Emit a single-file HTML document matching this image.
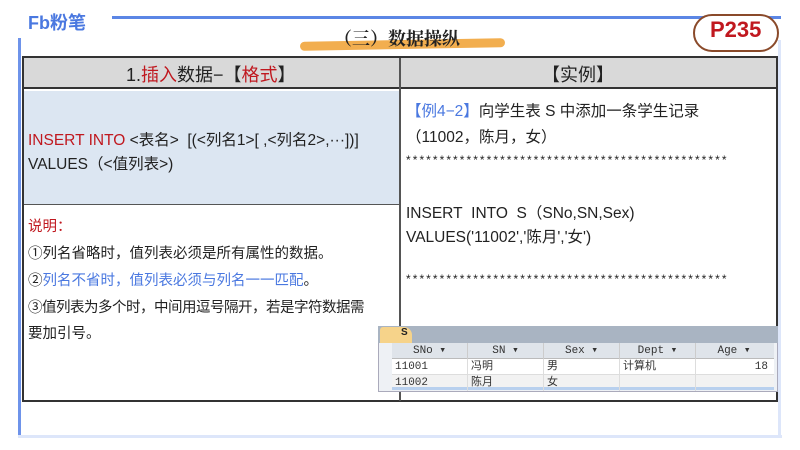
<!DOCTYPE html><html><head><meta charset="utf-8"><style>
*{margin:0;padding:0;box-sizing:border-box}
body{width:800px;height:450px;background:#fff;position:relative;overflow:hidden;font-family:"Liberation Sans","Noto Sans CJK SC",sans-serif;color:#222}
.a{position:absolute}
.t{position:absolute;font-size:15.5px;white-space:nowrap}
.c{position:absolute;font-size:14.5px;white-space:nowrap}
.s{position:absolute;font-size:12px;letter-spacing:2.05px;white-space:nowrap}
.r{color:#c0181f}.b{color:#4a78e0}
</style></head><body>
<div class="a" style="left:112px;top:16px;width:669px;height:3px;background:#5b86e5"></div>
<div class="a" style="left:18px;top:38px;width:3px;height:400px;background:#6e93ea"></div>
<div class="a" style="left:18px;top:435px;width:764px;height:3px;background:#dde6fa"></div>
<div class="a" style="left:778px;top:40px;width:3px;height:398px;background:#dde6fa"></div>
<div class="t" style="left:28px;top:9px;font-size:18px;font-weight:bold;color:#4a78e0">Fb粉笔</div>
<div class="a" style="left:300px;top:40px;width:205px;height:9px;background:#f0a030;border-radius:6px;transform:rotate(-1deg);opacity:.85"></div>
<div class="t" style="left:334px;top:25px;font-size:18px;font-weight:bold;font-family:'Noto Serif CJK SC',serif">（三）数据操纵</div>
<div class="a" style="left:693px;top:14px;width:86px;height:38px;border:2px solid #8a4a2a;border-radius:20px;background:#fff"></div>
<div class="t" style="left:710px;top:17px;font-size:22px;font-weight:bold;color:#c0181f">P235</div>
<div class="a" style="left:22px;top:56px;width:756px;height:346px;border:2px solid #333"></div>
<div class="a" style="left:24px;top:58px;width:752px;height:31px;background:#d9d9d9;border-bottom:2px solid #333"></div>
<div class="a" style="left:24px;top:91px;width:376px;height:114px;background:#dce6f2;border-bottom:1px solid #555"></div>
<div class="a" style="left:399px;top:58px;width:2px;height:343px;background:#555"></div>
<div class="t" style="left:126px;top:61px;font-size:18px">1.<span class="r">插入</span>数据−【<span class="r">格式</span>】</div>
<div class="t" style="left:542px;top:61px;font-size:18px">【实例】</div>
<div class="t" style="left:28px;top:128px"><span class="r">INSERT INTO</span> &lt;表名&gt;&nbsp; [(&lt;列名1&gt;[ ,&lt;列名2&gt;,···])]</div>
<div class="t" style="left:28px;top:152px">VALUES（&lt;值列表&gt;)</div>
<div class="c r" style="left:28px;top:215px">说明：</div>
<div class="c" style="left:28px;top:242px">①列名省略时，值列表必须是所有属性的数据。</div>
<div class="c" style="left:28px;top:269px">②<span class="b">列名不省时，值列表必须与列名一一匹配</span>。</div>
<div class="c" style="left:28px;top:296px;letter-spacing:-0.5px">③值列表为多个时，中间用逗号隔开，若是字符数据需</div>
<div class="c" style="left:28px;top:322px">要加引号。</div>
<div class="t" style="left:406px;top:99px"><span class="b">【例4−2】</span>向学生表 S 中添加一条学生记录</div>
<div class="t" style="left:406px;top:125px">（11002，陈月，女）</div>
<div class="s" style="left:406px;top:153px">************************************************</div>
<div class="t" style="left:406px;top:201px">INSERT&nbsp; INTO&nbsp; S（SNo,SN,Sex)</div>
<div class="t" style="left:406px;top:225px">VALUES('11002','陈月','女')</div>
<div class="s" style="left:406px;top:272px">************************************************</div>
<div class="a" style="left:378px;top:326px;width:400px;height:66px;background:#eef1f5;border:1px solid #aab"></div>
<div class="a" style="left:378px;top:326px;width:400px;height:17px;background:#a9b4c2"></div>
<div class="a" style="left:380px;top:327px;width:32px;height:16px;background:#f6d38a;border-radius:3px 8px 0 0"></div>
<div class="t" style="left:401px;top:327px;font-size:10px;font-weight:bold">S</div>
<div class="a" style="left:392px;top:343px;width:382px;height:16px;background:#dfe4ea;border-bottom:1px solid #bbb"></div>
<div class="a" style="left:392px;top:359px;width:382px;height:16px;background:#fff;border-bottom:1px solid #ddd"></div>
<div class="a" style="left:392px;top:375px;width:382px;height:15px;background:#f2f2f2;border-bottom:3px solid #b8d0ee"></div>
<div style="position:absolute;left:392px;top:343px;font-family:'Liberation Mono','Noto Sans CJK SC',monospace;font-size:11px;color:#333">
<div style="display:flex;height:16px;line-height:16px"><span style="width:76px;text-align:center;border-right:1px solid #ccc">SNo ▾</span><span style="width:76px;text-align:center;border-right:1px solid #ccc">SN ▾</span><span style="width:76px;text-align:center;border-right:1px solid #ccc">Sex ▾</span><span style="width:76px;text-align:center;border-right:1px solid #ccc">Dept ▾</span><span style="width:76px;text-align:center">Age ▾</span></div>
<div style="display:flex;height:16px;line-height:16px"><span style="width:76px;padding-left:3px;border-right:1px solid #ddd">11001</span><span style="width:76px;padding-left:3px;border-right:1px solid #ddd">冯明</span><span style="width:76px;padding-left:3px;border-right:1px solid #ddd">男</span><span style="width:76px;padding-left:3px;border-right:1px solid #ddd">计算机</span><span style="width:76px;text-align:right;padding-right:4px">18</span></div>
<div style="display:flex;height:16px;line-height:16px"><span style="width:76px;padding-left:3px;border-right:1px solid #ddd">11002</span><span style="width:76px;padding-left:3px;border-right:1px solid #ddd">陈月</span><span style="width:76px;padding-left:3px;border-right:1px solid #ddd">女</span><span style="width:76px;border-right:1px solid #ddd"></span><span style="width:76px"></span></div>
</div>
</body></html>
